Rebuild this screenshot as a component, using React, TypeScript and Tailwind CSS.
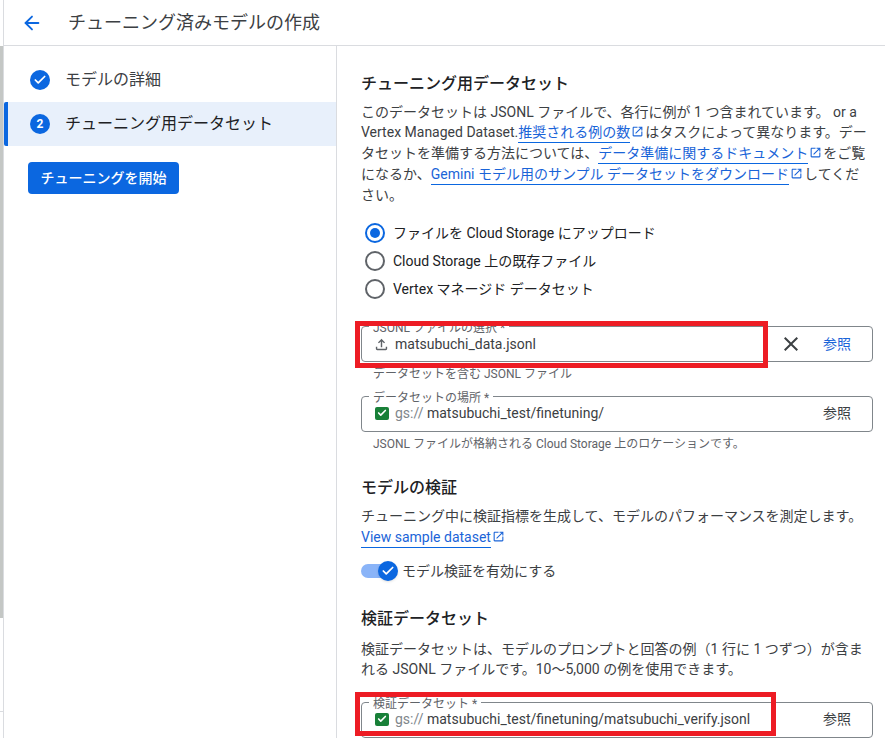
import { ArrowLeft, Check } from "lucide-react";
import type { ReactNode } from "react";

const font = { fontFamily: '"Roboto", "Noto Sans CJK JP", sans-serif' };

function OpenIcon() {
  return (
    <svg viewBox="0 0 24 24" className="inline-block w-[13px] h-[13px] mx-[1px] align-[-1px]" fill="#1a64d8">
      <path d="M19 19H5V5h7V3H5c-1.11 0-2 .9-2 2v14c0 1.1.89 2 2 2h14c1.1 0 2-.9 2-2v-7h-2v7zM14 3v2h3.59l-9.83 9.83 1.41 1.41L19 6.41V10h2V3h-7z" />
    </svg>
  );
}

function DocLink({ children }: { children: ReactNode }) {
  return (
    <>
      <a className="text-[#1a64d8] border-b border-[#0b67e0] leading-[19px] inline-block">{children}</a>
      <OpenIcon />
    </>
  );
}

function Radio({ checked, label }: { checked?: boolean; label: string }) {
  return (
    <div className="flex items-center h-[28px] pl-[4px] gap-[8px]">
      <span className={`w-[20px] h-[20px] rounded-full border-2 flex items-center justify-center ${checked ? "border-[#0b67e0]" : "border-[#5f6368]"}`}>
        {checked && <span className="w-[10px] h-[10px] rounded-full bg-[#0b67e0]" />}
      </span>
      <span className="text-[14px] text-[#202124]">{label}</span>
    </div>
  );
}

function GreenCheck() {
  return (
    <span className="ml-[2px] w-[14px] h-[13px] rounded-[2px] bg-[#188038] flex items-center justify-center shrink-0">
      <Check className="w-[10px] h-[10px] text-white" strokeWidth={4} />
    </span>
  );
}

function UploadIcon() {
  return (
    <svg viewBox="0 0 24 24" className="w-[17px] h-[17px]" fill="#5f6368">
      <path d="M18 15v3H6v-3H4v3c0 1.1.9 2 2 2h12c1.1 0 2-.9 2-2v-3h-2zM7 9l1.41 1.41L11 7.83V16h2V7.83l2.59 2.58L17 9l-5-5-5 5z" />
    </svg>
  );
}

function CloseIcon() {
  return (
    <svg viewBox="0 0 24 24" className="w-[24px] h-[24px] mr-[20px]" fill="#3c4043">
      <path d="M19 6.41 17.59 5 12 10.59 6.41 5 5 6.41 10.59 12 5 17.59 6.41 19 12 13.41 17.59 19 19 17.59 13.41 12z" />
    </svg>
  );
}

function Field({
  label,
  icon,
  value,
  clear,
  hint,
}: {
  label: string;
  icon: ReactNode;
  value: ReactNode;
  clear?: boolean;
  hint?: string;
}) {
  return (
    <div>
      <div className={`relative h-[36px] border border-[#80868b] rounded-[4px] flex items-center pl-[11px] pr-[21px] ${clear ? "" : "pb-[2px]"}`}>
        <span className="absolute -top-[6px] left-[7px] bg-white px-[4px] text-[12px] leading-[14px] text-[#5f6368]">{label}</span>
        <div className="w-[22px] flex items-center">{icon}</div>
        <div className="flex-1 text-[14px] text-[#3c4043] whitespace-nowrap">{value}</div>
        {clear && <CloseIcon />}
        <span className={`text-[14px] ${clear ? "text-[#1a64d8]" : "text-[#3c4043]"}`}>参照</span>
      </div>
      {hint && <div className="text-[12px] leading-[16px] text-[#5f6368] pl-[12px] mt-[4px]">{hint}</div>}
    </div>
  );
}

export default function App() {
  return (
    <div className="w-[885px] h-[738px] overflow-hidden bg-white relative flex" style={font}>
      <div className="w-[4px] shrink-0 border-r border-[#dadce0] flex flex-col">
        <div className="h-[46px]" />
        <div className="h-[572px] w-[3px] bg-[#c4c7c5]" />
        <div className="h-[93px]" />
        <div className="h-px w-[3px] bg-[#dadce0]" />
      </div>
      <div className="flex-1 flex flex-col min-w-0">
        <header className="h-[46px] shrink-0 border-b border-[#dadce0] flex items-center pl-[17px]">
          <ArrowLeft className="w-[22px] h-[22px] text-[#0b67e0]" strokeWidth={2} />
          <h1 className="ml-[25px] text-[18px] text-[#3c4043]">チューニング済みモデルの作成</h1>
        </header>
        <div className="flex-1 flex min-h-0">
          <aside className="w-[333px] shrink-0 border-r border-[#dadce0]">
            <div className="h-[56px] flex items-center pl-[26px] pt-[11px] gap-[15px]">
              <span className="w-[20px] h-[20px] rounded-full bg-[#0b67e0] flex items-center justify-center">
                <Check className="w-[14px] h-[14px] text-white" strokeWidth={3} />
              </span>
              <span className="text-[16px] text-[#3c4043]">モデルの詳細</span>
            </div>
            <div className="h-[44px] bg-[#e8f0fb] border-l-4 border-[#0b67e0] rounded-l-[2px] flex items-center pl-[22px] gap-[15px]">
              <span className="w-[20px] h-[20px] rounded-full bg-[#0b67e0] flex items-center justify-center text-white text-[12px] font-bold">2</span>
              <span className="text-[16px] text-[#202124]">チューニング用データセット</span>
            </div>
            <button className="ml-[24px] mt-[16px] h-[32px] w-[151px] rounded-[4px] bg-[#0b67e0] text-white text-[14px] font-medium">
              チューニングを開始
            </button>
          </aside>
          <main className="flex-1 min-w-0 pl-[24px] pr-[12px] pt-[27px]">
            <h2 className="text-[16px] leading-[22px] font-medium text-[#202124]">チューニング用データセット</h2>
            <p className="mt-[7px] text-[14px] leading-[20px] text-[#3c4043]">
              このデータセットは JSONL ファイルで、各行に例が 1 つ含まれています。 or a Vertex Managed Dataset.
              <DocLink>推奨される例の数</DocLink>はタスクによって異なります。データセットを準備する方法については、
              <DocLink>データ準備に関するドキュメント</DocLink>をご覧になるか、
              <DocLink>Gemini モデル用のサンプル データセットをダウンロード</DocLink>してください。
            </p>
            <div className="mt-[14px]">
              <Radio checked label="ファイルを Cloud Storage にアップロード" />
              <Radio label="Cloud Storage 上の既存ファイル" />
              <Radio label="Vertex マネージド データセット" />
            </div>
            <div className="mt-[23px]">
              <Field
                label="JSONL ファイルの選択 *"
                icon={<UploadIcon />}
                value="matsubuchi_data.jsonl"
                clear
                hint="データセットを含む JSONL ファイル"
              />
            </div>
            <div className="mt-[14px]">
              <Field
                label="データセットの場所 *"
                icon={<GreenCheck />}
                value={<><span className="text-[#80868b]">gs://</span> matsubuchi_test/finetuning/</>}
                hint="JSONL ファイルが格納される Cloud Storage 上のロケーションです。"
              />
            </div>
            <h2 className="mt-[25px] text-[16px] leading-[22px] font-medium text-[#202124]">モデルの検証</h2>
            <p className="mt-[7px] text-[14px] leading-[20px] text-[#3c4043]">
              チューニング中に検証指標を生成して、モデルのパフォーマンスを測定します。
            </p>
            <div className="mt-[1px] text-[14px] leading-[20px]">
              <DocLink>View sample dataset</DocLink>
            </div>
            <div className="mt-[13px] flex items-center h-[20px]">
              <div className="relative w-[36px] h-[14px] rounded-full bg-[#8ab4f8]">
                <span className="absolute -right-[1px] -top-[3px] w-[20px] h-[20px] rounded-full bg-[#0b67e0] shadow flex items-center justify-center">
                  <Check className="w-[14px] h-[14px] text-white" strokeWidth={3} />
                </span>
              </div>
              <span className="ml-[5px] text-[14px] text-[#3c4043]">モデル検証を有効にする</span>
            </div>
            <h2 className="mt-[27px] text-[16px] leading-[22px] font-medium text-[#202124]">検証データセット</h2>
            <p className="mt-[9px] text-[14px] leading-[20px] text-[#3c4043]">
              検証データセットは、モデルのプロンプトと回答の例（1 行に 1 つずつ）が含まれる JSONL ファイルです。10〜5,000 の例を使用できます。
            </p>
            <div className="mt-[23px]">
              <Field
                label="検証データセット *"
                icon={<GreenCheck />}
                value={<><span className="text-[#80868b]">gs://</span> matsubuchi_test/finetuning/matsubuchi_verify.jsonl</>}
              />
            </div>
          </main>
        </div>
      </div>
      <div className="absolute left-[355px] top-[321px] w-[413px] h-[47px] border-[5px] border-[#ed1c24]" />
      <div className="absolute left-[355px] top-[692px] w-[421px] h-[44px] border-[5px] border-[#ed1c24]" />
    </div>
  );
}
